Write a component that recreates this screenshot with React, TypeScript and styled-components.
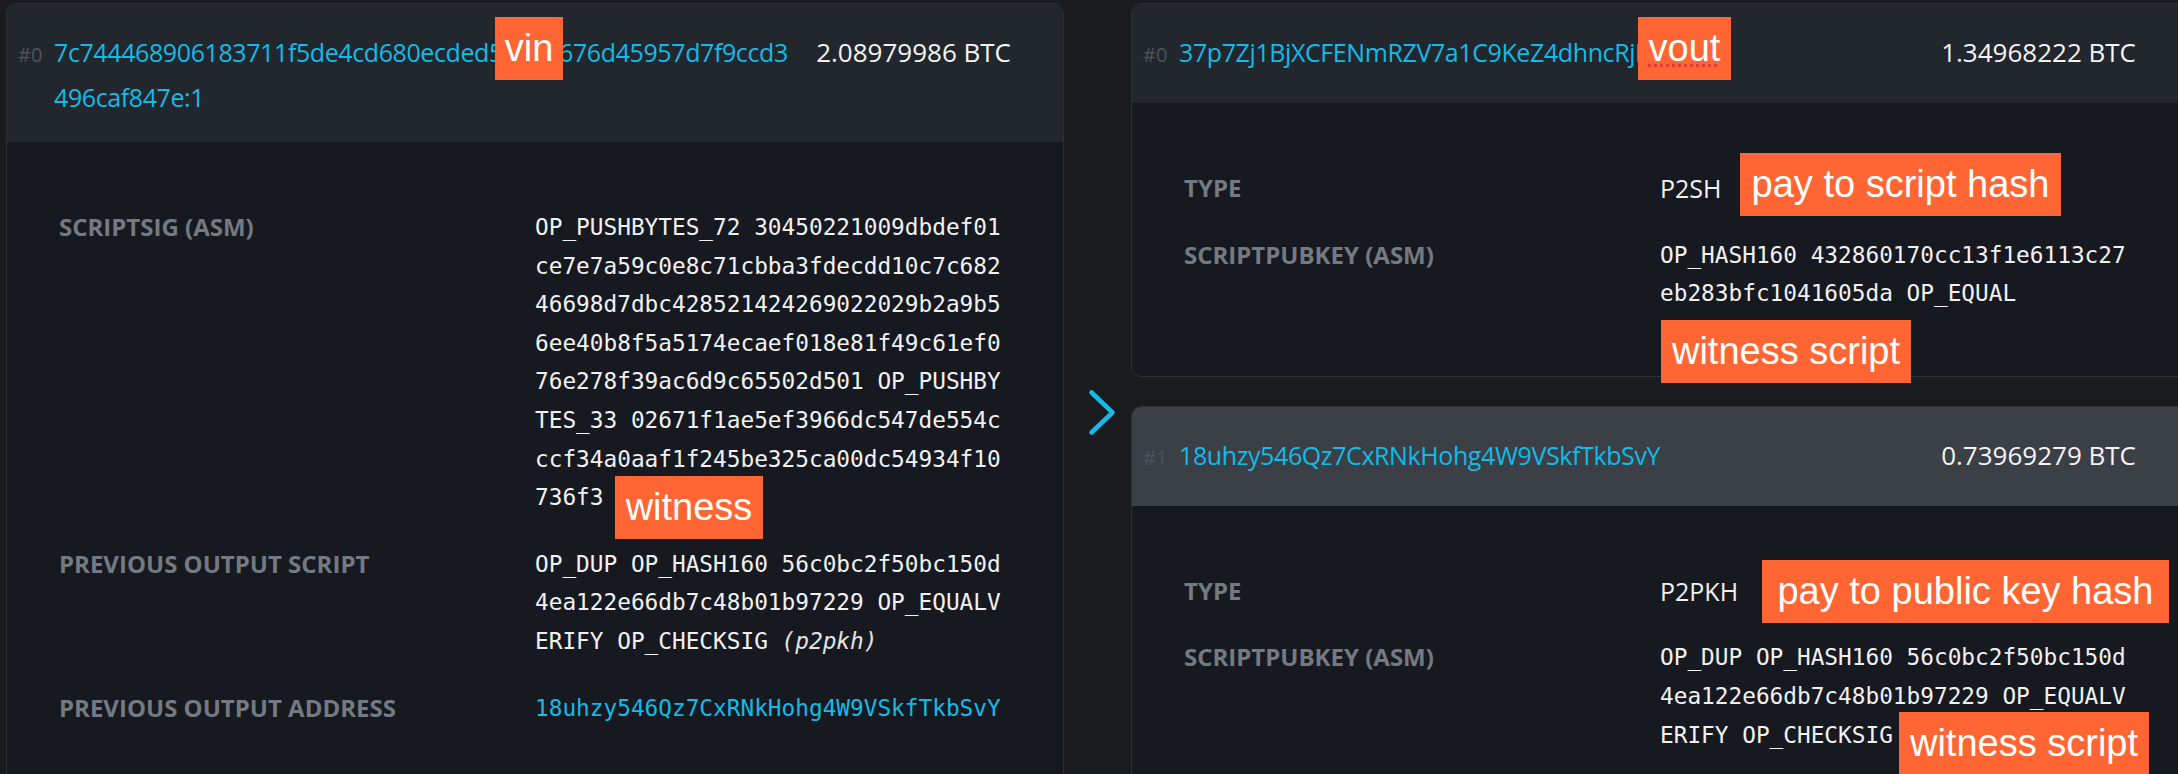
import React from 'react';
import styled, { createGlobalStyle, css } from 'styled-components';

const GlobalStyle = createGlobalStyle`
  * { box-sizing: border-box; }
  html, body {
    margin: 0;
    padding: 0;
    background: #1a1b1f;
    overflow: hidden;
  }
  body {
    font-family: "Open Sans", "Noto Sans", sans-serif;
    color: #f1f1f1;
  }
`;

const CYAN = '#12bbe8';

const Page = styled.div`
  position: relative;
  display: flex;
  align-items: flex-start;
  width: 2200px;
  height: 774px;
  padding: 3px 0 0 6px;
  overflow: hidden;
  background: #1a1b1f;
`;

const Column = styled.div`
  flex: 0 0 1058px;
  display: flex;
  flex-direction: column;
  gap: 29px;
`;

const ArrowColumn = styled.div`
  flex: 0 0 67px;
  padding: 385px 0 0 23px;
`;

const Card = styled.section`
  border: 1px solid #2b2f36;
  border-radius: 10px;
  overflow: hidden;
  background: #171920;
`;

const CardHeader = styled.div<{ $active?: boolean }>`
  display: flex;
  align-items: baseline;
  min-height: 99px;
  padding: 26px 52px 22px 11px;
  line-height: 45px;
  background: ${(p) => (p.$active ? '#3b3f46' : '#22262d')};
`;

const Index = styled.span`
  flex: 0 0 36px;
  font-size: 20px;
  color: #4d535b;
`;

const Address = styled.a`
  flex: 1 1 auto;
  min-width: 0;
  font-size: 25px;
  letter-spacing: -0.4px;
  color: ${CYAN};
  text-decoration: none;
  word-break: break-all;
`;

const Amount = styled.span`
  flex: 0 0 217px;
  text-align: right;
  white-space: nowrap;
  font-size: 26px;
  color: #f4f4f4;
`;

const CardBody = styled.div`
  padding: 52px 52px 49px;
`;

const DetailRow = styled.div`
  display: grid;
  grid-template-columns: 476px 1fr;
  padding: 14px 0;
  line-height: 38.6px;
`;

const Label = styled.div`
  font-size: 24px;
  font-weight: 700;
  color: #737a82;
  text-transform: uppercase;
`;

const Value = styled.div<{ $mono?: boolean; $link?: boolean }>`
  min-width: 0;
  word-break: break-all;
  color: ${(p) => (p.$link ? CYAN : '#f1f1f1')};
  ${(p) =>
    p.$mono
      ? css`
          font-family: "DejaVu Sans Mono", "Liberation Mono", monospace;
          font-size: 22.75px;
        `
      : css`
          font-size: 25px;
        `}
`;

const ScriptType = styled.em`
  font-style: italic;
  color: #e4e4e4;
`;

const Note = styled.div<{ $x: number; $y: number; $w: number; $mark?: boolean }>`
  position: absolute;
  left: ${(p) => p.$x}px;
  top: ${(p) => p.$y}px;
  width: ${(p) => p.$w}px;
  height: 63px;
  line-height: 63px;
  text-align: center;
  white-space: nowrap;
  background: #ff6633;
  color: #ffffff;
  font-family: "Liberation Sans", Arial, Helvetica, sans-serif;
  font-size: 38px;
  ${(p) =>
    p.$mark &&
    css`
      text-decoration: underline dotted #e53a2f;
      text-decoration-thickness: 3px;
      text-underline-offset: 3px;
    `}
`;

const Chevron = () => (
  <svg width="30" height="49" viewBox="0 0 30 49" aria-hidden="true">
    <polyline
      points="4.5,4.5 25.5,24.5 4.5,44.5"
      fill="none"
      stroke={CYAN}
      strokeWidth="4.5"
      strokeLinecap="round"
      strokeLinejoin="round"
    />
  </svg>
);

type Row = { label: string; value: React.ReactNode; mono?: boolean; link?: boolean };

type Entry = {
  index: number;
  address: string;
  amount: string;
  active?: boolean;
  rows: Row[];
};

const vin: Entry = {
  index: 0,
  address: '7c744468906183711f5de4cd680ecded50b1a676d45957d7f9ccd3496caf847e:1',
  amount: '2.08979986 BTC',
  rows: [
    {
      label: 'ScriptSig (ASM)',
      mono: true,
      value:
        'OP_PUSHBYTES_72 30450221009dbdef01ce7e7a59c0e8c71cbba3fdecdd10c7c68246698d7dbc428521424269022029b2a9b56ee40b8f5a5174ecaef018e81f49c61ef076e278f39ac6d9c65502d501 OP_PUSHBYTES_33 02671f1ae5ef3966dc547de554cccf34a0aaf1f245be325ca00dc54934f10736f3',
    },
    {
      label: 'Previous output script',
      mono: true,
      value: (
        <>
          OP_DUP OP_HASH160 56c0bc2f50bc150d4ea122e66db7c48b01b97229 OP_EQUALVERIFY OP_CHECKSIG{' '}
          <ScriptType>(p2pkh)</ScriptType>
        </>
      ),
    },
    {
      label: 'Previous output address',
      mono: true,
      link: true,
      value: '18uhzy546Qz7CxRNkHohg4W9VSkfTkbSvY',
    },
  ],
};

const vouts: Entry[] = [
  {
    index: 0,
    address: '37p7Zj1BjXCFENmRZV7a1C9KeZ4dhncRjL',
    amount: '1.34968222 BTC',
    rows: [
      { label: 'Type', value: 'P2SH' },
      {
        label: 'ScriptPubKey (ASM)',
        mono: true,
        value: 'OP_HASH160 432860170cc13f1e6113c27eb283bfc1041605da OP_EQUAL',
      },
    ],
  },
  {
    index: 1,
    address: '18uhzy546Qz7CxRNkHohg4W9VSkfTkbSvY',
    amount: '0.73969279 BTC',
    active: true,
    rows: [
      { label: 'Type', value: 'P2PKH' },
      {
        label: 'ScriptPubKey (ASM)',
        mono: true,
        value:
          'OP_DUP OP_HASH160 56c0bc2f50bc150d4ea122e66db7c48b01b97229 OP_EQUALVERIFY OP_CHECKSIG',
      },
    ],
  },
];

const EntryCard = ({ entry }: { entry: Entry }) => (
  <Card>
    <CardHeader $active={entry.active}>
      <Index>#{entry.index}</Index>
      <Address href="#">{entry.address}</Address>
      <Amount>{entry.amount}</Amount>
    </CardHeader>
    <CardBody>
      {entry.rows.map((row) => (
        <DetailRow key={row.label}>
          <Label>{row.label}</Label>
          <Value $mono={row.mono} $link={row.link}>
            {row.value}
          </Value>
        </DetailRow>
      ))}
    </CardBody>
  </Card>
);

const notes = [
  { text: 'vin', x: 495, y: 17, w: 68 },
  { text: 'vout', x: 1638, y: 17, w: 93, mark: true },
  { text: 'pay to script hash', x: 1740, y: 153, w: 321 },
  { text: 'witness script', x: 1661, y: 320, w: 250 },
  { text: 'witness', x: 615, y: 476, w: 148 },
  { text: 'pay to public key hash', x: 1762, y: 560, w: 407 },
  { text: 'witness script', x: 1899, y: 712, w: 250 },
];

export default function App() {
  return (
    <>
      <GlobalStyle />
      <Page>
        <Column>
          <EntryCard entry={vin} />
        </Column>
        <ArrowColumn>
          <Chevron />
        </ArrowColumn>
        <Column>
          {vouts.map((v) => (
            <EntryCard key={v.index} entry={v} />
          ))}
        </Column>
        {notes.map((n, i) => (
          <Note key={i} $x={n.x} $y={n.y} $w={n.w} $mark={n.mark}>
            {n.text}
          </Note>
        ))}
      </Page>
    </>
  );
}
